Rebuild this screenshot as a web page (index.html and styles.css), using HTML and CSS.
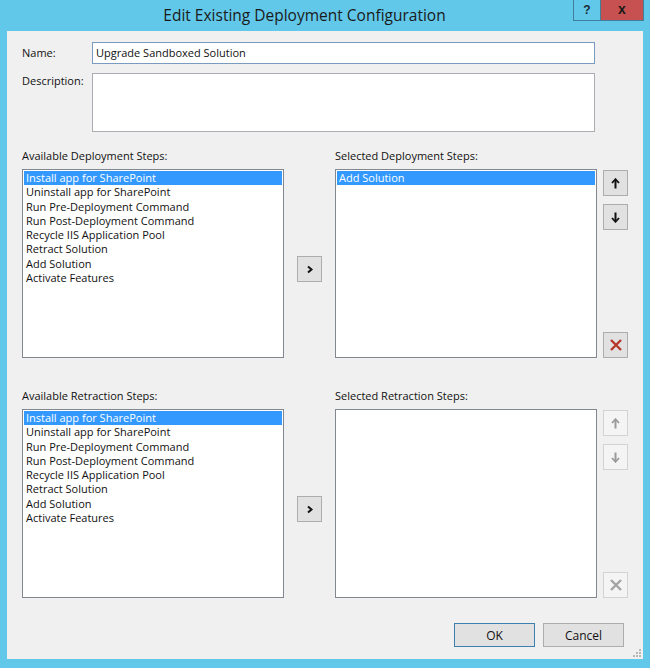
FILE: index.html
```html
<!DOCTYPE html>
<html lang="en">
<head>
<meta charset="utf-8">
<title>Edit Existing Deployment Configuration</title>
<link rel="stylesheet" href="styles.css">
</head>
<body>
<div class="window">
  <div class="titlebar">
    <div class="title">Edit Existing Deployment Configuration</div>
    <div class="caption-btn help">?</div>
    <div class="caption-btn close">x</div>
  </div>
  <div class="client">
    <div class="fields">
      <label class="field-label name-label">Name:</label>
      <div class="textbox name-box">Upgrade Sandboxed Solution</div>
      <label class="field-label desc-label">Description:</label>
      <div class="textbox desc-box"></div>
    </div>

    <div class="steps">
      <div class="steps-label">Available Deployment Steps:</div>
      <div class="spacer"></div>
      <div class="steps-label">Selected Deployment Steps:</div>
      <div class="spacer"></div>
      <ul class="listbox">
        <li class="selected">Install app for SharePoint</li>
        <li>Uninstall app for SharePoint</li>
        <li>Run Pre-Deployment Command</li>
        <li>Run Post-Deployment Command</li>
        <li>Recycle IIS Application Pool</li>
        <li>Retract Solution</li>
        <li>Add Solution</li>
        <li>Activate Features</li>
      </ul>
      <div class="move-col">
        <button class="btn icon-btn"><svg width="8" height="9" viewBox="0 0 8 9"><path d="M2 1.5 L5.5 4.5 L2 7.5" fill="none" stroke="#111" stroke-width="2"/></svg></button>
      </div>
      <ul class="listbox">
        <li class="selected">Add Solution</li>
      </ul>
      <div class="order-col">
        <button class="btn icon-btn"><svg width="9" height="11" viewBox="0 0 9 11"><path d="M4.5 10.5 V2" stroke="#111" stroke-width="2"/><path d="M1 5 L4.5 1.2 L8 5" fill="none" stroke="#111" stroke-width="1.8"/></svg></button>
        <button class="btn icon-btn"><svg width="9" height="11" viewBox="0 0 9 11"><path d="M4.5 0.5 V9" stroke="#111" stroke-width="2"/><path d="M1 6 L4.5 9.8 L8 6" fill="none" stroke="#111" stroke-width="1.8"/></svg></button>
        <button class="btn icon-btn remove"><svg width="14" height="14" viewBox="0 0 14 14"><path d="M2 2 L12 12 M12 2 L2 12" stroke="#b7382a" stroke-width="2.4"/></svg></button>
      </div>
    </div>

    <div class="steps retraction">
      <div class="steps-label">Available Retraction Steps:</div>
      <div class="spacer"></div>
      <div class="steps-label">Selected Retraction Steps:</div>
      <div class="spacer"></div>
      <ul class="listbox">
        <li class="selected">Install app for SharePoint</li>
        <li>Uninstall app for SharePoint</li>
        <li>Run Pre-Deployment Command</li>
        <li>Run Post-Deployment Command</li>
        <li>Recycle IIS Application Pool</li>
        <li>Retract Solution</li>
        <li>Add Solution</li>
        <li>Activate Features</li>
      </ul>
      <div class="move-col">
        <button class="btn icon-btn"><svg width="8" height="9" viewBox="0 0 8 9"><path d="M2 1.5 L5.5 4.5 L2 7.5" fill="none" stroke="#111" stroke-width="2"/></svg></button>
      </div>
      <ul class="listbox"></ul>
      <div class="order-col">
        <button class="btn icon-btn disabled"><svg width="9" height="11" viewBox="0 0 9 11"><path d="M4.5 10.5 V2" stroke="#9a9a9a" stroke-width="2"/><path d="M1 5 L4.5 1.2 L8 5" fill="none" stroke="#9a9a9a" stroke-width="1.8"/></svg></button>
        <button class="btn icon-btn disabled"><svg width="9" height="11" viewBox="0 0 9 11"><path d="M4.5 0.5 V9" stroke="#9a9a9a" stroke-width="2"/><path d="M1 6 L4.5 9.8 L8 6" fill="none" stroke="#9a9a9a" stroke-width="1.8"/></svg></button>
        <button class="btn icon-btn remove disabled"><svg width="14" height="14" viewBox="0 0 14 14"><path d="M2 2 L12 12 M12 2 L2 12" stroke="#a3a3a3" stroke-width="2.4"/></svg></button>
      </div>
    </div>

    <div class="actions">
      <button class="btn text-btn default">OK</button>
      <button class="btn text-btn">Cancel</button>
    </div>

    <svg class="grip" width="10" height="10" viewBox="0 0 10 10">
      <g fill="#b8b8b8">
        <rect x="7" y="1" width="2" height="2"/>
        <rect x="4" y="4" width="2" height="2"/>
        <rect x="7" y="4" width="2" height="2"/>
        <rect x="1" y="7" width="2" height="2"/>
        <rect x="4" y="7" width="2" height="2"/>
        <rect x="7" y="7" width="2" height="2"/>
      </g>
    </svg>
  </div>
</div>
</body>
</html>
```

FILE: styles.css
```css
* { box-sizing: border-box; }

html, body {
  margin: 0;
  padding: 0;
  background: #62c8ea;
}

body {
  font-family: "Open Sans", "Noto Sans", sans-serif;
  font-size: 11px;
  color: #111;
}

.window {
  width: 650px;
  height: 668px;
  background: #62c8ea;
  padding: 0 7px 9px 7px;
  display: flex;
  flex-direction: column;
}

.titlebar {
  height: 31px;
  display: flex;
  align-items: flex-start;
  margin-right: -1px;
}

.title {
  flex: 1;
  text-align: center;
  padding-left: 29px;
  font-size: 15.5px;
  line-height: 30px;
  color: #1a1a1a;
}

.caption-btn {
  height: 21px;
  display: flex;
  align-items: center;
  justify-content: center;
  font-family: "Liberation Sans", sans-serif;
  font-weight: bold;
  font-size: 12px;
  border: 1px solid #3f7f9c;
  border-top: none;
}

.help {
  width: 28px;
  color: #1a2a33;
}

.close {
  width: 43px;
  background: #c75050;
  color: #1a1a1a;
  border-left: none;
  font-size: 14px;
  padding-bottom: 2px;
}

.client {
  position: relative;
  flex: 1;
  background: #f0f0f0;
  padding: 11px 0 0 15px;
  display: flex;
  flex-direction: column;
}

.fields {
  display: grid;
  grid-template-columns: 70px 503px;
  row-gap: 9px;
}

.field-label {
  line-height: 16px;
}

.name-label {
  align-self: center;
}

.textbox {
  background: #fff;
  border: 1px solid #abadb3;
  padding: 0 3px;
}

.name-box {
  height: 22px;
  line-height: 19px;
  border-color: #7a9bbf;
}

.desc-box {
  height: 59px;
}

.steps {
  display: grid;
  grid-template-columns: 262px 51px 262px 31px;
  grid-template-rows: 16px 189px;
  row-gap: 5px;
  margin-top: 16px;
}

.retraction {
  margin-top: 30px;
}

.steps-label {
  line-height: 16px;
}

.listbox {
  list-style: none;
  margin: 0;
  padding: 1px;
  background: #fff;
  border: 1px solid #828790;
  overflow: hidden;
}

.listbox li {
  height: 14.3px;
  line-height: 14px;
  padding-left: 2px;
  white-space: nowrap;
}

.listbox li.selected {
  background: #3399ff;
  color: #fff;
}

.btn {
  font-family: inherit;
  font-size: 11px;
  color: #111;
  background: #e1e1e1;
  border: 1px solid #adadad;
  border-radius: 0;
  padding: 0;
  margin: 0;
}

.icon-btn {
  width: 25px;
  height: 26px;
  display: flex;
  align-items: center;
  justify-content: center;
}

.icon-btn.disabled {
  background: #f4f4f4;
  border-color: #d3d3d3;
}

.move-col {
  display: flex;
  justify-content: center;
  padding-top: 87px;
}

.order-col {
  display: flex;
  flex-direction: column;
  gap: 8px;
  padding: 1px 0 0 6px;
}

.order-col .remove {
  margin-top: auto;
}

.actions {
  display: flex;
  justify-content: flex-end;
  gap: 8px;
  margin-top: 25px;
  padding-right: 19px;
}

.text-btn {
  width: 81px;
  height: 24px;
  font-size: 12px;
}

.text-btn.default {
  border-color: #3c7fb1;
}

.grip {
  position: absolute;
  right: 1px;
  bottom: 1px;
}
```
